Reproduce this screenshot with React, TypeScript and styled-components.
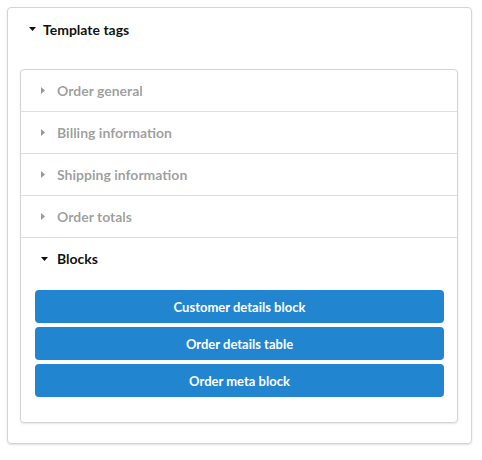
import React, { useState } from "react";
import styled, { createGlobalStyle } from "styled-components";

const GlobalStyle = createGlobalStyle`
  html, body {
    margin: 0;
    padding: 0;
    background: #ffffff;
    font-family: Lato, "Helvetica Neue", Arial, sans-serif;
    font-size: 14px;
  }
  * { box-sizing: border-box; }
`;

const sections = [
  "Order general",
  "Billing information",
  "Shipping information",
  "Order totals",
];

const blocks = [
  "Customer details block",
  "Order details table",
  "Order meta block",
];

const Caret = ({ open, width }: { open: boolean; width: number }) => (
  <CaretBox $width={width}>
    {open ? (
      <svg width="7" height="4" viewBox="0 0 7 4">
        <path d="M0 0 L7 0 L3.5 4 Z" fill="currentColor" />
      </svg>
    ) : (
      <svg width="4" height="7" viewBox="0 0 4 7">
        <path d="M0 0 L4 3.5 L0 7 Z" fill="currentColor" />
      </svg>
    )}
  </CaretBox>
);

const App = () => {
  const [openKey, setOpenKey] = useState<string>("Blocks");

  return (
    <>
      <GlobalStyle />
      <Page>
        <OuterCard>
          <MainTitle>
            <Caret open={true} width={14} />
            Template tags
          </MainTitle>
          <InnerCard>
            {sections.map((name) => (
              <Row key={name} onClick={() => setOpenKey(name)}>
                <RowTitle $active={openKey === name}>
                  <Caret open={openKey === name} width={16} />
                  {name}
                </RowTitle>
              </Row>
            ))}
            <Row>
              <RowTitle
                $active={openKey === "Blocks"}
                onClick={() => setOpenKey("Blocks")}
              >
                <Caret open={openKey === "Blocks"} width={16} />
                Blocks
              </RowTitle>
              {openKey === "Blocks" && (
                <ButtonList>
                  {blocks.map((b) => (
                    <BlueButton key={b}>{b}</BlueButton>
                  ))}
                </ButtonList>
              )}
            </Row>
          </InnerCard>
        </OuterCard>
      </Page>
    </>
  );
};

export default App;

const Page = styled.div`
  padding: 7px 10px 16px 7px;
`;

const OuterCard = styled.div`
  border: 1px solid #d4d4d5;
  border-radius: 4px;
  box-shadow: 0 1px 2px rgba(0, 0, 0, 0.12);
  padding: 0 13px 20px 12px;
`;

const MainTitle = styled.div`
  display: flex;
  align-items: center;
  height: 42px;
  margin-bottom: 19px;
  padding-left: 9px;
  font-weight: 700;
  font-size: 14px;
  color: rgba(0, 0, 0, 0.95);
`;

const CaretBox = styled.span<{ $width: number }>`
  display: flex;
  align-items: center;
  flex: none;
  width: ${(p) => p.$width}px;

  svg {
    display: block;
  }
`;

const InnerCard = styled.div`
  border: 1px solid #d4d4d5;
  border-radius: 4px;
  box-shadow: 0 1px 2px rgba(0, 0, 0, 0.1);
`;

const Row = styled.div`
  border-top: 1px solid rgba(34, 36, 38, 0.15);
  &:first-child {
    border-top: none;
  }
`;

const RowTitle = styled.div<{ $active: boolean }>`
  display: flex;
  align-items: center;
  height: 41px;
  padding-left: 20px;
  font-weight: 700;
  font-size: 14px;
  cursor: pointer;
  color: ${(p) => (p.$active ? "rgba(0, 0, 0, 0.95)" : "rgba(0, 0, 0, 0.4)")};
`;

const ButtonList = styled.div`
  display: flex;
  flex-direction: column;
  gap: 4px;
  padding: 11px 13px 25px 14px;
`;

const BlueButton = styled.button`
  height: 33px;
  border: none;
  border-radius: 4px;
  background: #2185d0;
  color: #ffffff;
  font-family: Lato, "Helvetica Neue", Arial, sans-serif;
  font-weight: 700;
  font-size: 13px;
  cursor: pointer;

  &:hover {
    background: #1678c2;
  }
`;
